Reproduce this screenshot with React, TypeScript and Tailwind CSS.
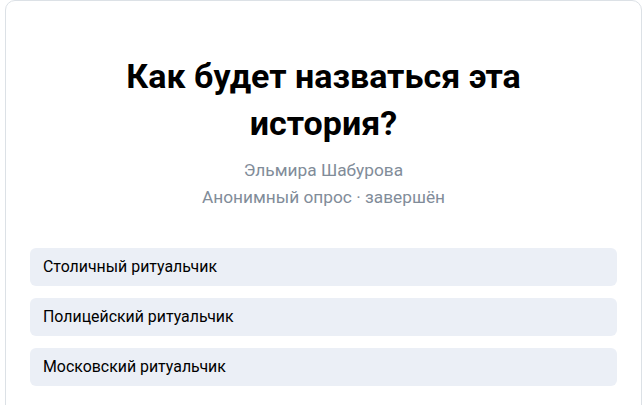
import React from 'react';

const options = ['Столичный ритуальчик', 'Полицейский ритуальчик', 'Московский ритуальчик'];

export default function App() {
  return (
    <div className="w-[644px] h-[405px] overflow-hidden bg-white font-['Roboto',sans-serif]">
      <div className="ml-[5px] mr-[2px] h-[420px] rounded-[10px] border border-[#dce1e6] bg-white px-[24px] pt-[52px]">
        <h1 className="mx-auto w-[440px] text-center text-[34px] font-bold leading-[47px] text-black">
          Как будет назваться эта история?
        </h1>
        <div className="mt-[10px] text-center text-[17.3px] leading-[27px] text-[#818c99]">
          <div>Эльмира Шабурова</div>
          <div>Анонимный опрос · завершён</div>
        </div>
        <div className="mt-[37px] flex flex-col gap-[12px]">
          {options.map((o) => (
            <div
              key={o}
              className="flex h-[38px] items-center rounded-[6px] bg-[#ebeff6] px-[13px] text-[15.9px] text-black"
            >
              {o}
            </div>
          ))}
        </div>
      </div>
    </div>
  );
}
